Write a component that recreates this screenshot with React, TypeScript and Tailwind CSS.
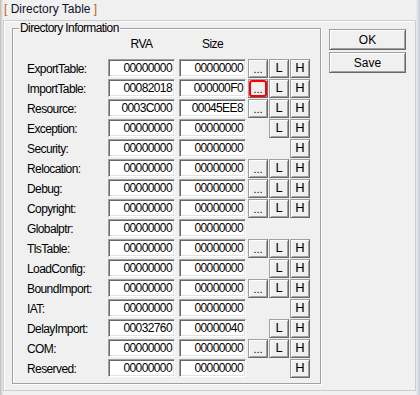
import React from "react";

type Row = { label: string; rva: string; size: string; dots: boolean; l: boolean; h: boolean; red?: boolean };

const rows: Row[] = [
  { label: "ExportTable:", rva: "00000000", size: "00000000", dots: true, l: true, h: true },
  { label: "ImportTable:", rva: "00082018", size: "000000F0", dots: true, l: true, h: true, red: true },
  { label: "Resource:", rva: "0003C000", size: "00045EE8", dots: true, l: true, h: true },
  { label: "Exception:", rva: "00000000", size: "00000000", dots: false, l: true, h: true },
  { label: "Security:", rva: "00000000", size: "00000000", dots: false, l: false, h: true },
  { label: "Relocation:", rva: "00000000", size: "00000000", dots: true, l: true, h: true },
  { label: "Debug:", rva: "00000000", size: "00000000", dots: true, l: true, h: true },
  { label: "Copyright:", rva: "00000000", size: "00000000", dots: true, l: true, h: true },
  { label: "Globalptr:", rva: "00000000", size: "00000000", dots: false, l: false, h: false },
  { label: "TlsTable:", rva: "00000000", size: "00000000", dots: true, l: true, h: true },
  { label: "LoadConfig:", rva: "00000000", size: "00000000", dots: false, l: true, h: true },
  { label: "BoundImport:", rva: "00000000", size: "00000000", dots: true, l: true, h: true },
  { label: "IAT:", rva: "00000000", size: "00000000", dots: false, l: false, h: true },
  { label: "DelayImport:", rva: "00032760", size: "00000040", dots: false, l: true, h: true },
  { label: "COM:", rva: "00000000", size: "00000000", dots: true, l: true, h: true },
  { label: "Reserved:", rva: "00000000", size: "00000000", dots: false, l: false, h: true },
];

function SmallBtn({ text, show, red }: { text: string; show: boolean; red?: boolean }) {
  if (!show) return <div className="w-[20px] h-[19px]" />;
  return (
    <div className="relative w-[20px] h-[19px] flex items-center justify-center bg-[#f0f0f0] border border-[#a0a0a0] border-r-[#696969] border-b-[#696969] shadow-[inset_1px_1px_0_#ffffff,inset_-1px_-1px_0_#a0a0a0] text-[13px] leading-[14px]">
      <span className={text === "..." ? "text-[11px] leading-[12px] mt-[1px]" : ""}>{text}</span>
      {red ? (
        <div className="absolute left-[0px] top-[0px] w-[18px] h-[17px] border-2 border-[#ff0000] rounded-[3px]" />
      ) : null}
    </div>
  );
}

function Edit({ value }: { value: string }) {
  return (
    <div className="w-[67px] h-[18px] bg-white border border-t-[#a0a0a0] border-l-[#a0a0a0] border-r-white border-b-white shadow-[inset_1px_1px_0_#696969,inset_-1px_-1px_0_#e3e3e3] flex items-center justify-end pr-[2px] text-[12px] leading-[14px] tracking-[-0.6px]">
      {value}
    </div>
  );
}

function BigBtn({ text }: { text: string }) {
  return (
    <div className="w-[77px] h-[21px] flex items-center justify-center bg-[#f0f0f0] border border-[#a0a0a0] border-r-[#696969] border-b-[#696969] shadow-[inset_1px_1px_0_#ffffff,inset_-1px_-1px_0_#a0a0a0] text-[12px] leading-[14px]">
      {text}
    </div>
  );
}

export default function App() {
  return (
    <div className="w-[420px] h-[395px] bg-[#f0f0f0] overflow-hidden flex text-black font-['Liberation_Sans',Arial,sans-serif]">
      <div className="w-[3px] h-full bg-gradient-to-r from-[#bdbdbd] to-[#ececec]" />
      <div className="w-[413px] flex flex-col">
        <div className="h-[20px] pt-[2px] pl-[1px] text-[12px] leading-[14px]">
          <span className="text-[#c0601c]">[</span>
          <span className="text-[#10102a]"> Directory Table </span>
          <span className="text-[#c0601c]">]</span>
        </div>
        <div className="w-[413px] h-[371px] border border-[#cdcdcd] shadow-[inset_1px_1px_0_#ffffff] flex">
          <div className="relative ml-[8px] mt-[7px] w-[309px] h-[356px] border border-[#a0a0a0] shadow-[inset_1px_1px_0_#ffffff,1px_1px_0_#ffffff] flex flex-col">
            <div className="absolute left-[6px] top-[-8px] px-[1px] bg-[#f0f0f0] text-[12px] leading-[14px] tracking-[-0.6px]">
              Directory Information
            </div>
            <div className="pt-[8px] h-[29px] flex text-[12px] leading-[14px] tracking-[-0.6px]">
              <div className="w-[95px]" />
              <div className="w-[67px] text-center">RVA</div>
              <div className="w-[4px]" />
              <div className="w-[67px] text-center">Size</div>
            </div>
            {rows.map((r) => (
              <div key={r.label} className="h-[20px] flex items-center">
                <div className="w-[95px] pl-[14px] text-[12px] leading-[14px] tracking-[-0.6px] mt-[2px]">{r.label}</div>
                <Edit value={r.rva} />
                <div className="w-[4px]" />
                <Edit value={r.size} />
                <div className="ml-[2px] flex gap-[1px]">
                  <SmallBtn text="..." show={r.dots} red={r.red} />
                  <SmallBtn text="L" show={r.l} />
                  <SmallBtn text="H" show={r.h} />
                </div>
              </div>
            ))}
          </div>
          <div className="ml-[8px] mt-[8px] flex flex-col gap-[2px]">
            <BigBtn text="OK" />
            <BigBtn text="Save" />
          </div>
        </div>
      </div>
      <div className="w-[4px] h-full bg-gradient-to-r from-[#eceef1] to-[#c4ccd8]" />
    </div>
  );
}
